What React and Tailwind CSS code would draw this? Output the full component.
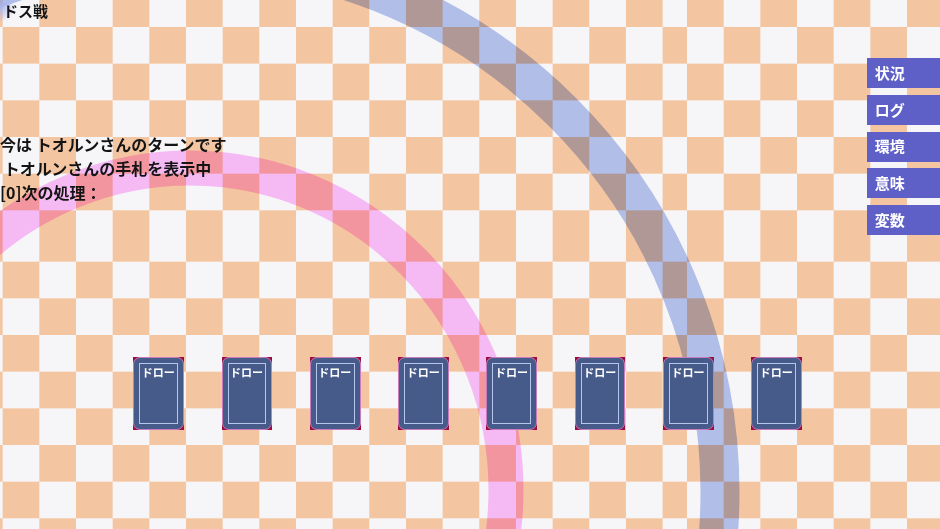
import React from 'react'

const TILE =
  'bg-[image:conic-gradient(#f6f6f8_0_25%,#f4c5a1_0_50%,#f6f6f8_0_75%,#f4c5a1_0)] bg-[length:73.33px_73.33px] bg-[position:0_0]'

const MENU = ['状況', 'ログ', '環境', '意味', '変数']

function Checker() {
  return (
    <div className="absolute inset-0 overflow-hidden">
      <div className="-ml-[34px] -mt-[83px] grid grid-cols-[720.7px_720.7px] grid-rows-[308px_308px]">
        <div className={TILE} />
        <div className={TILE} />
        <div className={TILE} />
        <div className={TILE} />
      </div>
    </div>
  )
}

function Arcs() {
  return (
    <svg
      className="pointer-events-none absolute inset-0 h-full w-full mix-blend-multiply"
      viewBox="0 0 940 529"
      fill="none"
    >
      <ellipse cx="190" cy="490" rx="316" ry="322" stroke="#fec1fa" strokeWidth="35" />
      <circle cx="183" cy="492" r="537" stroke="#b8c5ef" strokeWidth="39" />
    </svg>
  )
}

function DrawCard() {
  return (
    <div className="h-[73.3px] w-[50.7px] bg-[#9b0d40]">
      <div className="h-full w-full rounded-[7px] border border-[#c97bbd] bg-[#475b8b] p-[5px]">
        <div className="h-full border border-[#b6c6ee] pl-[1.5px] pt-[3px] text-[11px] font-bold leading-none text-white">
          ドロー
        </div>
      </div>
    </div>
  )
}

export default function App() {
  return (
    <div className="relative h-[529px] w-[940px] overflow-hidden font-[family-name:'Noto_Sans_CJK_JP','Noto_Sans',sans-serif] text-[#141414]">
      <Checker />
      <Arcs />

      <div className="relative flex h-full">
        <div className="flex flex-1 flex-col">
          <div className="relative h-[22px] pl-[3px] text-[15px] font-bold leading-[22px]">
            <div className="absolute left-0 top-0 h-[22px] w-[14px] bg-[radial-gradient(circle_at_0_30%,#aab6ee,transparent_75%)]" />
            <span className="relative">ドス戦</span>
          </div>

          <div className="mt-[109.5px] text-[16px] font-bold leading-[24px]">
            <p className="whitespace-pre">今は トオルンさんのターンです</p>
            <p className="whitespace-pre"> トオルンさんの手札を表示中</p>
            <p className="whitespace-pre">[0]次の処理：</p>
          </div>

          <div className="mt-[153.2px] flex gap-[37.6px] pl-[133.3px]">
            {Array.from({ length: 8 }).map((_, i) => (
              <DrawCard key={i} />
            ))}
          </div>
        </div>

        <div className="flex w-[73.3px] flex-col gap-[6.7px] pt-[58.3px]">
          {MENU.map((m) => (
            <div
              key={m}
              className="flex h-[30px] items-center bg-[#5f5fc8] pl-[8px] text-[15px] font-bold text-white"
            >
              {m}
            </div>
          ))}
        </div>
      </div>
    </div>
  )
}
